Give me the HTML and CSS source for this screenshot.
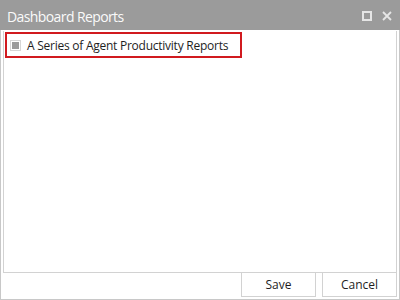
FILE: index.html
```html
<!DOCTYPE html>
<html lang="en">
<head>
    <meta charset="UTF-8">
    <meta name="viewport" content="width=device-width, initial-scale=1.0">
    <title>Dashboard Reports</title>
    <link rel="stylesheet" href="styles.css">
</head>
<body>
    <div class="window">
        <!-- Title bar -->
        <div class="titlebar">
            <span class="title">Dashboard Reports</span>
            <div class="controls">
                <svg class="ctl" width="10" height="10" viewBox="0 0 10 10">
                    <rect x="1" y="1" width="8" height="8" fill="none" stroke="#e6e6e6" stroke-width="2"/>
                </svg>
                <svg class="ctl" width="10" height="10" viewBox="0 0 10 10">
                    <path d="M1 1 L9 9 M9 1 L1 9" stroke="#e6e6e6" stroke-width="1.8"/>
                </svg>
            </div>
        </div>

        <!-- Report list -->
        <div class="list">
            <div class="item selected">
                <span class="check"><span class="box"></span></span>
                <span class="label">A Series of Agent Productivity Reports</span>
            </div>
        </div>

        <!-- Footer -->
        <div class="footer">
            <button class="btn">Save</button>
            <button class="btn">Cancel</button>
        </div>
    </div>
</body>
</html>
```

FILE: styles.css
```css
body {
    margin: 0;
    font-family: "Open Sans", "Noto Sans", Arial, sans-serif;
    background: #fff;
}

.window {
    width: 400px;
    height: 300px;
    box-sizing: border-box;
    border: 1px solid #c8c8c8;
    border-top: none;
    display: flex;
    flex-direction: column;
    background: #fff;
}

.titlebar {
    height: 30px;
    margin: 0 -1px;
    background: #9b9b9b;
    display: flex;
    align-items: center;
    justify-content: space-between;
    padding: 0 8px 0 7px;
    flex-shrink: 0;
}

.title {
    color: #fafafa;
    font-size: 14px;
    letter-spacing: -0.6px;
    margin-top: 2px;
}

.controls {
    display: flex;
    gap: 10px;
    align-items: center;
    margin-top: 2px;
}

.ctl {
    display: block;
}

.list {
    flex: 1;
    margin: 1px 2px 0 2px;
    border: 1px solid #d2d2d2;
    border-top: none;
    padding: 1px 0 0 1px;
}

.item {
    display: flex;
    align-items: center;
    width: fit-content;
    height: 22px;
    padding: 0 12px 0 3px;
    border: 2px solid #d11a1f;
}

.check {
    width: 11px;
    height: 11px;
    border: 1px solid #d6d6d6;
    box-sizing: border-box;
    display: flex;
    align-items: center;
    justify-content: center;
    margin-right: 6px;
}

.box {
    width: 7px;
    height: 7px;
    background: #9b9b9b;
}

.label {
    font-size: 12px;
    letter-spacing: -0.25px;
    color: #1e1e1e;
}

.footer {
    height: 25px;
    display: flex;
    justify-content: flex-end;
    gap: 6px;
    padding: 0 2px 1px 0;
}

.btn {
    width: 75px;
    height: 25px;
    margin-top: -1px;
    background: #fff;
    border: 1px solid #d2d2d2;
    font-family: inherit;
    font-size: 12px;
    color: #1e1e1e;
    padding: 0;
}
```
